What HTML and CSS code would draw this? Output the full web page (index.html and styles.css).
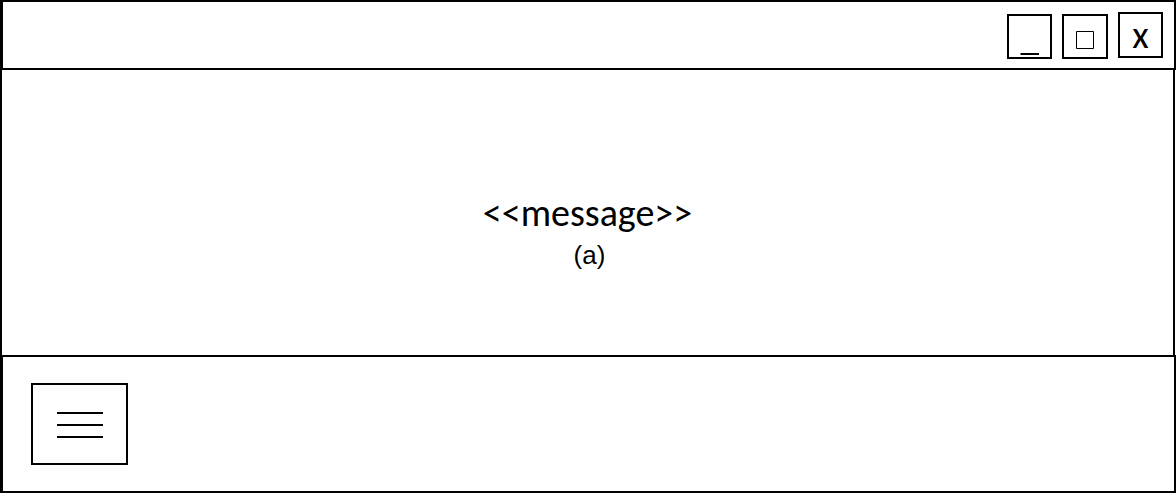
FILE: index.html
```html
<!DOCTYPE html>
<html lang="en">
<head>
<meta charset="utf-8">
<meta name="viewport" content="width=device-width, initial-scale=1">
<title>Message window</title>
<link rel="stylesheet" href="styles.css">
</head>
<body>
<div class="window">
  <header class="title-bar">
    <div class="size-controls">
      <button class="control" type="button" aria-label="Minimize">
        <svg class="glyph" viewBox="0 0 41 41" aria-hidden="true"><path d="M11.500 38h18.500" stroke="#000" stroke-width="2"/></svg>
      </button>
      <button class="control control-wide" type="button" aria-label="Maximize">
        <svg class="glyph" viewBox="0 0 42 41" aria-hidden="true"><path d="M12.500 15.500h17v17h-17z" fill="none" stroke="#000" stroke-width="1"/></svg>
      </button>
    </div>
    <button class="control control-close" type="button" aria-label="Close">x</button>
  </header>
  <main class="content">
    <p class="message">&lt;&lt;message&gt;&gt;</p>
    <p class="label">(a)</p>
  </main>
  <footer class="footer">
    <button class="menu" type="button" aria-label="Menu">
      <span class="line"></span>
      <span class="line"></span>
      <span class="line"></span>
    </button>
  </footer>
</div>
</body>
</html>
```
FILE: styles.css
```css
* {
  box-sizing: border-box;
}

body {
  margin: 0;
  background: #fff;
  color: #000;
  font-family: Carlito, Lato, sans-serif;
}

.window {
  display: flex;
  flex-direction: column;
  min-height: 100vh;
}

.title-bar {
  display: flex;
  justify-content: flex-end;
  align-items: flex-start;
  gap: 10px;
  padding: 10px 11px 9px;
  border: 2px solid #000;
  border-left-width: 3px;
}

.size-controls {
  display: flex;
  gap: 10px;
  padding-top: 2px;
}

.control {
  display: flex;
  justify-content: center;
  align-items: center;
  width: 45px;
  height: 45px;
  padding: 0;
  border: 2px solid #000;
  background: #fff;
  color: #000;
}

.control-wide {
  width: 46px;
}

.control-close {
  height: 46px;
  font-family: Carlito, Lato, sans-serif;
  font-size: 38px;
  line-height: 40px;
}

.glyph {
  flex: 1;
  height: 41px;
}

.content {
  flex: 1;
  display: flex;
  flex-direction: column;
  justify-content: center;
  align-items: center;
  margin-right: 1px;
  padding: 60px 0 20px;
  border: solid #000;
  border-width: 0 2px;
}

.message,
.label {
  margin: 0;
}

.message {
  font-size: 38px;
  line-height: 44px;
}

.label {
  padding-left: 4px;
  font-family: "Liberation Sans", Arial, sans-serif;
  font-size: 26px;
  line-height: 40px;
}

.footer {
  padding: 26px 28px;
  border: 2px solid #000;
  border-left-width: 3px;
}

.menu {
  display: flex;
  flex-direction: column;
  justify-content: center;
  align-items: center;
  gap: 10px;
  width: 97px;
  height: 82px;
  padding: 2px 0 0;
  border: 2px solid #000;
  background: #fff;
}

.line {
  width: 46px;
  height: 2px;
  background: #000;
}
```
